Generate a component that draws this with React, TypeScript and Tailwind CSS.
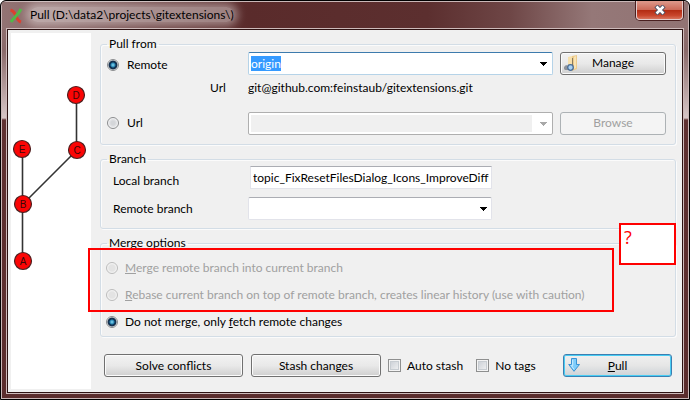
import { useEffect, useRef, type ReactNode } from 'react';

const NODES = [
  { id: 'D', x: 65, y: 62 },
  { id: 'E', x: 11, y: 116 },
  { id: 'C', x: 66, y: 117 },
  { id: 'B', x: 12, y: 171 },
  { id: 'A', x: 12, y: 228 },
];

function CommitGraph() {
  return (
    <svg width="80" height="356" className="block" role="img" aria-label="Commit graph">
      <g stroke="#333" strokeWidth="1.6">
        <path d="M65.5 62V117" />
        <path d="M66 117L12 171" />
        <path d="M11.500 116V228" />
      </g>
      {NODES.map((n) => (
        <g key={n.id}>
          <circle cx={n.x} cy={n.y} r="8.500" fill="#fb0505" stroke="#4d2020" strokeWidth="1.200" />
          <text x={n.x} y={n.y + 4} textAnchor="middle" fontSize="10" fill="#3a0808" fontFamily="Liberation Sans, sans-serif">
            {n.id}
          </text>
        </g>
      ))}
    </svg>
  );
}

function Arrow({ disabled }: { disabled?: boolean }) {
  return (
    <svg width="7" height="4" viewBox="0 0 7 4" className="block" aria-hidden="true" shapeRendering="crispEdges">
      <path d="M0 0H7V1H6V2H5V3H4V4H3V3H2V2H1V1H0Z" fill={disabled ? '#a9a9a9' : '#000'} />
    </svg>
  );
}

function Group({ title, className, children }: { title: string; className: string; children: ReactNode }) {
  return (
    <fieldset className={`min-w-0 rounded-[3px] border border-[#d3dde6] shadow-[inset_1px_1px_0_#fbfbfb,1px_1px_0_#fbfbfb] ${className}`}>
      <legend className="ml-[6px] h-[14px] px-[2px] leading-[14px]">{title}</legend>
      {children}
    </fieldset>
  );
}

function Radio({ id, name, checked, disabled }: { id: string; name: string; checked?: boolean; disabled?: boolean }) {
  return (
    <input
      id={id}
      name={name}
      type="radio"
      defaultChecked={checked}
      disabled={disabled}
      className="size-[12px] shrink-0 appearance-none rounded-full border border-[#8a8c8e] bg-[radial-gradient(circle,#d4d6d9_0_2px,#e6e7e9_4px,#fafafa_5px)] checked:bg-[radial-gradient(circle_at_5px_5px,#8fdcf5_0,#2787b5_2px,#0f2f50_3px,#19334f_4px,#f4f4f4_5px)] disabled:border-[#bcbcbc] disabled:bg-[radial-gradient(circle,#e3e3e3_0_3px,#f6f6f6_5px)]"
    />
  );
}

function Check({ id, label }: { id: string; label: string }) {
  return (
    <div className="flex items-center gap-[6px]">
      <input
        id={id}
        type="checkbox"
        className="size-[13px] appearance-none border border-[#8e8f8f] bg-linear-to-br from-[#c6cbd2] to-[#f6f6f6] shadow-[inset_0_0_0_1px_#f4f4f4,inset_0_0_0_2px_#c8cdd2]"
      />
      <label htmlFor={id}>{label}</label>
    </div>
  );
}

const BUTTON =
  'relative h-[23px] shrink-0 rounded-[3px] border border-[#707070] bg-linear-to-b from-[#f2f2f2] via-[#e9e9e9] via-50% to-[#cfcfcf] text-center leading-[20px] shadow-[inset_0_0_0_1px_#fbfbfb]';

function ManageIcon() {
  return (
    <svg width="16" height="18" viewBox="0 0 16 18" className="absolute top-[2px] left-[3px]" aria-hidden="true">
      <path d="M4 2L8 1V14L4 13Z" fill="#f7e0ac" />
      <path d="M8 1L13 0V14L8 16Z" fill="#edcb8c" />
      <path d="M10 2L12 1V13L10 14Z" fill="#f9e4b4" />
      <path d="M8.500 3V10" stroke="#8a7c60" strokeWidth="1" />
      <path d="M0 12L2 10L4 11V15H1L0 14Z" fill="#8e9299" />
      <circle cx="6.500" cy="12.500" r="2.800" fill="#a9d2f5" stroke="#4b6c94" strokeWidth="1.300" />
    </svg>
  );
}

function PullIcon() {
  return (
    <svg width="13" height="14" viewBox="0 0 13 14" className="absolute top-[3px] left-[4px]" aria-hidden="true">
      <path d="M3.500 0.500H8.500V6.500H11.500L6 13.300L0.700 6.500H3.500Z" fill="#7fcdfb" stroke="#3a93d4" strokeLinejoin="round" />
      <path d="M4.700 1.700V7.600H3.400L6 11.400" fill="none" stroke="#cdeeff" />
    </svg>
  );
}

export default function App() {
  const remote = useRef<HTMLInputElement>(null);
  useEffect(() => {
    remote.current?.focus();
    remote.current?.select();
  }, []);

  return (
    <div className="relative flex min-h-screen w-full flex-col overflow-hidden rounded-t-[6px] border border-black bg-[#5b2d2d] bg-[linear-gradient(to_bottom,#947575_0,#8a6a6a_50px,#d6c6c6_117px,#5f3131_119px,#5b2d2d_100%)] px-[6px] pb-[6px] font-['Lato','Open_Sans',sans-serif] text-[12px] leading-[16px] text-black shadow-[inset_0_0_0_1px_#c9b7b7]">
      <header className="-mx-[5px] mt-px flex h-[27px] items-start bg-[linear-gradient(to_right,#927373_0,#8a6868_8%,#6b4040_24%,#5a2b2b_36%,#5c2f2f_62%,#6e4646_74%,#957878_86%,#917373_100%)] pl-[7px]">
        <svg width="14" height="16" viewBox="0 0 14 16" className="mt-[6px] shrink-0" aria-hidden="true">
          <path d="M1.500 2Q5 3 7 8T12 14" fill="none" stroke="#dc4030" strokeWidth="3" />
          <path d="M12 1Q10 5 7 8T2 14" fill="none" stroke="#50b848" strokeWidth="3" />
        </svg>
        <h1 className="mt-[4px] ml-[7px] flex-1 text-[12px] leading-[18px] font-normal">
          <span className="rounded-full bg-white/40 shadow-[0_0_8px_4px_rgb(255_255_255/0.4)]">Pull (D:\data2\projects\gitextensions\)</span>
        </h1>
        <button
          type="button"
          aria-label="Close"
          className="-mt-px mr-[5px] flex h-[19px] w-[47px] items-center justify-center rounded-b-[4px] border border-t-0 border-[#e3cccc] bg-[linear-gradient(to_bottom,#dd9a8c_0,#cc6a58_48%,#b22a12_50%,#c8452c_80%,#d8735c_100%)] shadow-[0_0_0_1px_#4a2020]"
        >
          <svg width="12" height="10" viewBox="0 0 12 10" aria-hidden="true">
            <path d="M2 1L10 9M10 1L2 9" stroke="#4b5064" strokeWidth="4.500" />
            <path d="M2.500 1.500L9.500 8.500M9.500 1.500L2.500 8.500" stroke="#fff" strokeWidth="2.500" />
          </svg>
        </button>
      </header>

      <main className="flex flex-1 border border-[#2c1212] bg-[#f0f0f0] pt-[3px] pr-[6px] pb-[3px] pl-[3px] shadow-[0_0_0_1px_#cdbaba]">
        <div className="w-[80px] shrink-0 self-stretch bg-white">
          <CommitGraph />
        </div>

        <form className="ml-[9px] min-w-0 flex-1 pt-[4px]" onSubmit={(e) => e.preventDefault()}>
          <Group title="Pull from" className="h-[108px]">
            <div className="grid grid-cols-[134px_1fr_106px] items-center gap-x-[7px] pr-[9px] pl-[6px]">
              <div className="flex items-center gap-[8px] pt-[4px]">
                <Radio id="remote" name="source" checked />
                <label htmlFor="remote">Remote</label>
              </div>
              <div className="mt-px flex h-[23px] items-center rounded-[2px] border border-[#b5d3e8] border-t-[#3d7bad] bg-white pr-[5px] pl-[2px]">
                <input
                  ref={remote}
                  aria-label="Remote"
                  defaultValue="origin"
                  className="h-[17px] min-w-0 flex-1 bg-transparent leading-[15px] outline-none selection:bg-[rgb(51_153_255/0.99)] selection:text-white"
                />
                <button type="button" aria-label="Show remotes">
                  <Arrow />
                </button>
              </div>
              <button type="button" className={`${BUTTON} w-full`}>
                <ManageIcon />
                Manage
              </button>
            </div>
            <div className="mt-[5px] grid h-[16px] grid-cols-[134px_1fr] gap-x-[7px] pl-[6px]">
              <span className="pl-[103px]">Url</span>
              <span>git@github.com:feinstaub/gitextensions.git</span>
            </div>
            <div className="mt-[15px] grid grid-cols-[134px_1fr_106px] items-center gap-x-[7px] pr-[9px] pl-[6px]">
              <div className="flex items-center gap-[8px]">
                <Radio id="url" name="source" />
                <label htmlFor="url">Url</label>
              </div>
              <div className="mt-px flex h-[23px] items-center rounded-[2px] border border-[#afafaf] bg-white p-[2px] pr-[5px]">
                <input aria-label="Url" disabled className="mr-[8px] h-[17px] min-w-0 flex-1 bg-[#f0f0f0]" />
                <button type="button" disabled aria-label="Show urls">
                  <Arrow disabled />
                </button>
              </div>
              <button
                type="button"
                disabled
                className="h-[23px] w-full rounded-[3px] border border-[#adb2b5] bg-[#f4f4f4] leading-[20px] text-[#a0a0a0]"
              >
                Browse
              </button>
            </div>
          </Group>

          <Group title="Branch" className="mt-[7px] h-[77px]">
            <div className="grid grid-cols-[135px_244px] items-center gap-y-[8px] pl-[12px]">
              <label htmlFor="local" className="self-end">
                Local branch
              </label>
              <input
                id="local"
                defaultValue="topic_FixResetFilesDialog_Icons_ImproveDiffDialog"
                className="ml-[2px] h-[23px] w-[242px] border border-[#e2e3ea] border-t-[#abadb3] bg-white px-[2px]"
              />
              <label htmlFor="branch">Remote branch</label>
              <div className="relative">
                <select id="branch" className="block h-[23px] w-full appearance-none rounded-[2px] border border-[#e2e3ea] border-t-[#abadb3] bg-white">
                  <option></option>
                </select>
                <span className="pointer-events-none absolute top-[10px] right-[5px]">
                  <Arrow />
                </span>
              </div>
            </div>
          </Group>

          <Group title="Merge options" className="mt-[7px] h-[101px]">
            <div className="flex flex-col gap-[11px] pt-[10px] pl-[5px]">
              <div className="flex items-center gap-[7px] text-[#a0a0a0]">
                <Radio id="merge" name="mode" disabled />
                <label htmlFor="merge">
                  <u>M</u>erge remote branch into current branch
                </label>
              </div>
              <div className="flex items-center gap-[7px] text-[#a0a0a0]">
                <Radio id="rebase" name="mode" disabled />
                <label htmlFor="rebase">
                  <u>R</u>ebase current branch on top of remote branch, creates linear history (use with caution)
                </label>
              </div>
              <div className="flex items-center gap-[7px]">
                <Radio id="fetch" name="mode" checked />
                <label htmlFor="fetch">
                  Do not merge, only <u>f</u>etch remote changes
                </label>
              </div>
            </div>
          </Group>

          <div className="mt-[17px] flex items-center pr-[4px] pl-[4px]">
            <button type="button" className={`${BUTTON} w-[139px]`}>
              Solve conflicts
            </button>
            <button type="button" className={`${BUTTON} mr-[7px] ml-[8px] w-[130px]`}>
              Stash changes
            </button>
            <div className="flex flex-1 gap-[13px]">
              <Check id="autostash" label="Auto stash" />
              <Check id="notags" label="No tags" />
            </div>
            <button
              type="submit"
              className="relative h-[23px] w-[109px] shrink-0 rounded-[3px] border border-[#3c7fb1] bg-linear-to-b from-[#f0f0f0] via-[#e6e6e6] via-50% to-[#cdd2d6] leading-[20px] shadow-[inset_0_0_0_1px_#48cdf4]"
            >
              <PullIcon />
              <u>P</u>ull
            </button>
          </div>
        </form>
      </main>

      <div className="pointer-events-none absolute top-[247px] left-[87px] h-[64px] w-[526px] border-2 border-[#fe0000]" />
      <div className="absolute top-[222px] left-[618px] h-[42px] w-[57px] border-2 border-[#fe0000] bg-white pl-[3px] font-['Open_Sans',sans-serif] text-[18px] leading-[24px] text-[#fe0000]">
        ?
      </div>
    </div>
  );
}
